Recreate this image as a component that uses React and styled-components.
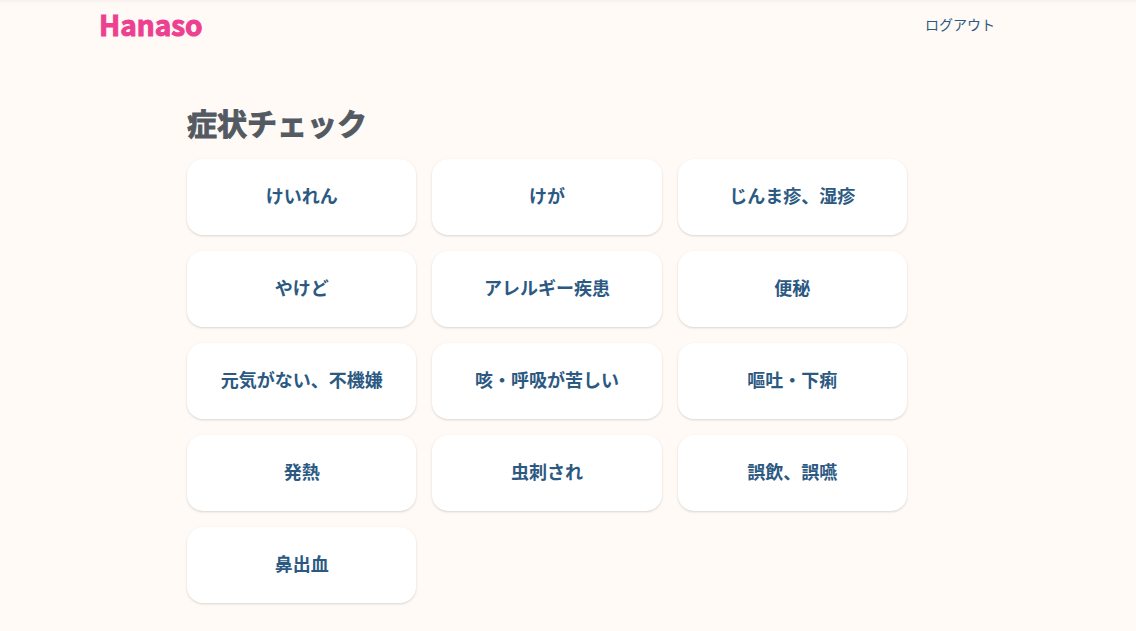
import React from 'react'
import styled, {createGlobalStyle} from 'styled-components'

const GlobalStyle = createGlobalStyle`
  * {
    box-sizing: border-box;
  }

  body {
    margin: 0;
    background: #fffaf5;
    font-family: 'Noto Sans CJK JP', 'Noto Sans', sans-serif;
    color: #535a62;
  }
`

const Page = styled.div`
  min-height: 100vh;
  padding: 0 42px 28px 0;
  background: linear-gradient(rgba(0, 0, 0, 0.04), rgba(0, 0, 0, 0)) no-repeat top / 100% 4px;
`

const Header = styled.header`
  display: flex;
  align-items: center;
  justify-content: space-between;
  height: 48px;
  margin: 0 99px;
`

const Logo = styled.a`
  font-size: 28px;
  font-weight: 700;
  line-height: 36px;
  color: #ed4090;
  text-decoration: none;
  -webkit-text-stroke: 1px currentColor;
`

const LogoutButton = styled.button`
  padding: 0;
  border: 0;
  background: none;
  font-family: inherit;
  font-size: 14px;
  line-height: 20px;
  color: #2c5982;
  cursor: pointer;
`

const Main = styled.main`
  max-width: 720px;
  margin: 0 auto;
  padding-top: 56px;
`

const Title = styled.h1`
  margin: 0 0 19px;
  font-size: 30px;
  font-weight: 700;
  line-height: 36px;
  -webkit-text-stroke: 1px currentColor;
`

const SymptomGrid = styled.div`
  display: grid;
  grid-template-columns: repeat(3, 1fr);
  gap: 16px;
`

const SymptomCard = styled.a`
  padding: 22px 24px 26px;
  border-radius: 16px;
  background: #fff;
  box-shadow: 0 1px 3px rgba(0, 0, 0, 0.1), 0 1px 2px rgba(0, 0, 0, 0.06);
  font-size: 18px;
  font-weight: 700;
  line-height: 28px;
  text-align: center;
  color: #2c5982;
  text-decoration: none;
`

const symptoms = [
  'けいれん',
  'けが',
  'じんま疹、湿疹',
  'やけど',
  'アレルギー疾患',
  '便秘',
  '元気がない、不機嫌',
  '咳・呼吸が苦しい',
  '嘔吐・下痢',
  '発熱',
  '虫刺され',
  '誤飲、誤嚥',
  '鼻出血',
]

export default function App() {
  return (
    <Page lang="ja">
      <GlobalStyle />
      <Header>
        <Logo href="#">Hanaso</Logo>
        <LogoutButton type="button">ログアウト</LogoutButton>
      </Header>
      <Main>
        <Title>症状チェック</Title>
        <SymptomGrid>
          {symptoms.map(x => <SymptomCard key={x} href="#">{x}</SymptomCard>)}
        </SymptomGrid>
      </Main>
    </Page>
  )
}
